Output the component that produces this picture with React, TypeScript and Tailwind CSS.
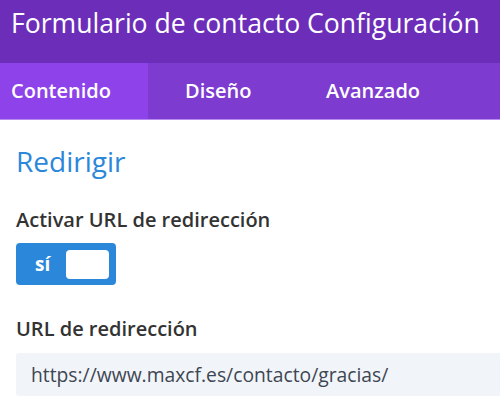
const tabs = [
  { label: 'Contenido', cls: 'w-[148px] bg-[#8e42ea] pl-[11px]' },
  { label: 'Diseño', cls: 'w-[141px] pl-[37px]' },
  { label: 'Avanzado', cls: 'pl-[37px]' },
];

export default function App() {
  return (
    <div className="w-[500px] h-[413px] overflow-hidden bg-white font-['Open_Sans',sans-serif]">
      {/* Header */}
      <div className="h-[63px] bg-[#6c2eb9] pl-[11px] pt-[10px]">
        <h1 className="text-[26.6px] text-white whitespace-nowrap leading-none">
          Formulario de contacto Configuración
        </h1>
      </div>

      {/* Tabs */}
      <div className="h-[57px] bg-[#7d3bd0] flex border-b border-[#b68cf0]">
        {tabs.map((tab) => (
          <div
            key={tab.label}
            className={`${tab.cls} flex items-center text-[20px] font-semibold text-white`}
          >
            {tab.label}
          </div>
        ))}
      </div>

      {/* Body */}
      <div className="pl-[16px]">
        <h2 className="mt-[27px] text-[28px] text-[#2b87da] leading-none">Redirigir</h2>

        <div className="mt-[35px] text-[20px] font-semibold text-[#333333] leading-none">
          Activar URL de redirección
        </div>

        <div className="mt-[13px] w-[100px] h-[42px] rounded-[4px] bg-[#2b87da] flex items-center pl-[19px] pr-[7px] justify-between">
          <span className="text-[19px] font-bold text-white leading-none">sí</span>
          <span className="w-[43px] h-[29px] rounded-[4px] bg-white" />
        </div>

        <div className="mt-[34px] text-[20px] font-semibold text-[#333333] leading-none">
          URL de redirección
        </div>

        <div className="mt-[14px] h-[43px] bg-[#f1f5f9] rounded-l-[3px] flex items-center pl-[15px]">
          <span className="text-[19.3px] text-[#3e4651] whitespace-nowrap leading-none">
            https://www.maxcf.es/contacto/gracias/
          </span>
        </div>
      </div>
    </div>
  );
}
